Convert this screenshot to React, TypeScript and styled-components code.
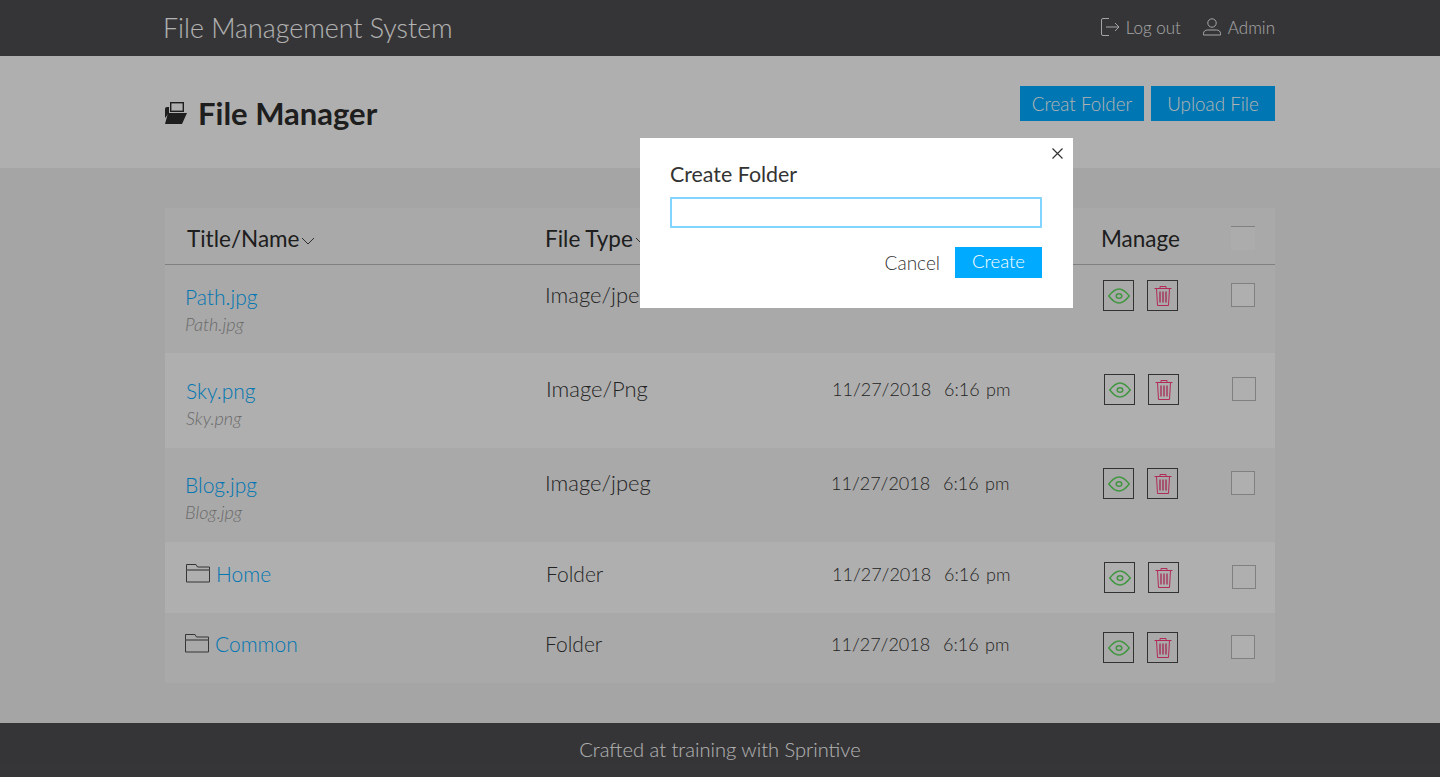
import React from "react";
import styled, { createGlobalStyle } from "styled-components";

interface FileRow {
  name: string;
  sub?: string;
  type: string;
  isFolder?: boolean;
  height: number;
  top: number;
}

const rows: FileRow[] = [
  { name: "Path.jpg", sub: "Path.jpg", type: "Image/jpeg", height: 88, top: 15 },
  { name: "Sky.png", sub: "Sky.png", type: "Image/Png", height: 95, top: 21 },
  { name: "Blog.jpg", sub: "Blog.jpg", type: "Image/jpeg", height: 94, top: 20 },
  { name: "Home", type: "Folder", isFolder: true, height: 71, top: 20 },
  { name: "Common", type: "Folder", isFolder: true, height: 70, top: 19 },
];

const GlobalStyle = createGlobalStyle`
  html, body {
    margin: 0;
    padding: 0;
    background: #ededed;
    font-family: "Lato", "Open Sans", "Liberation Sans", sans-serif;
    font-weight: 300;
  }
  * {
    box-sizing: border-box;
  }
`;

function LogoutIcon() {
  return (
    <svg width="20" height="20" viewBox="0 0 20 20" fill="none" stroke="#fff" strokeWidth="1">
      <path d="M9 1.500H3a1.500 1.500 0 0 0-1.500 1.500v14a1.500 1.500 0 0 0 1.500 1.500h6" />
      <path d="M6 10h13M15 6l4 4-4 4" />
    </svg>
  );
}

function UserIcon() {
  return (
    <svg width="20" height="20" viewBox="0 0 20 20" fill="none" stroke="#fff" strokeWidth="1">
      <circle cx="10" cy="6" r="4.200" />
      <path d="M1.500 18v-1.500c0-2.200 1.800-3.500 4-3.500h9c2.200 0 4 1.300 4 3.500V18z" />
    </svg>
  );
}

function ManagerIcon() {
  return (
    <svg width="22" height="22" viewBox="0 0 22 22">
      <rect x="5.700" y="0.700" width="12.600" height="8.600" fill="none" stroke="#2c2c2c" strokeWidth="1.400" />
      <path d="M4 5v6l-4 5V7a2 2 0 0 1 2-2z" fill="#2c2c2c" />
      <path d="M3 11h19l-5 11H0z" fill="#2c2c2c" />
    </svg>
  );
}

function FolderIcon() {
  return (
    <svg width="24" height="20" viewBox="0 0 24 20" fill="none" stroke="#4c4c4c" strokeWidth="1">
      <path d="M0.500 1.500h9.500l1.500 2.500h12v15h-23z" />
      <path d="M0.500 7h23" stroke="#7c7c7c" strokeWidth="1.500" />
    </svg>
  );
}

function EyeIcon() {
  return (
    <svg width="22" height="16" viewBox="0 0 22 16" fill="none" stroke="#5ed85e" strokeWidth="1.500">
      <path d="M0.800 8C4 3.800 7.500 1 11 1S18 3.800 21.200 8C18 12.200 14.500 15 11 15S4 12.200 0.800 8z" />
      <ellipse cx="11" cy="8" rx="2.800" ry="2.300" />
    </svg>
  );
}

function TrashIcon() {
  return (
    <svg width="18" height="21" viewBox="0 0 18 21" fill="none" stroke="#ff3d7f" strokeWidth="1">
      <path d="M0.500 3.500h17" />
      <path d="M6 3.500V1.500h6v2" />
      <path d="M2.500 3.500l1 17h11l1-17" />
      <path d="M6 6.500v11M9 6.500v11M12 6.500v11" stroke="#e8004f" />
    </svg>
  );
}

function Caret() {
  return (
    <svg width="14" height="8" viewBox="0 0 14 8" fill="none" stroke="#444" strokeWidth="1">
      <path d="M1 1l6 6 6-6" />
    </svg>
  );
}

function CloseIcon() {
  return (
    <svg width="13" height="13" viewBox="0 0 13 13" fill="none" stroke="#333" strokeWidth="1.200">
      <path d="M1.500 1.500l10 10M11.500 1.500l-10 10" />
    </svg>
  );
}

export default function App() {
  return (
    <>
      <GlobalStyle />
      <Page>
        <TopBar>
          <Brand>File Management System</Brand>
          <UserNav>
            <NavItem>
              <LogoutIcon />
              Log out
            </NavItem>
            <NavItem>
              <UserIcon />
              Admin
            </NavItem>
          </UserNav>
        </TopBar>

        <Hero>
          <PageTitle>
            <ManagerIcon />
            File Manager
          </PageTitle>
          <HeroActions>
            <PrimaryButton>Creat Folder</PrimaryButton>
            <PrimaryButton>Upload File</PrimaryButton>
          </HeroActions>
        </Hero>

        <Main>
          <Table>
            <HeadRow>
              <HeadCell>
                Title/Name
                <Caret />
              </HeadCell>
              <HeadCell>
                File Type
                <Caret />
              </HeadCell>
              <HeadCell />
              <HeadCell>Manage</HeadCell>
              <HeadCheck />
            </HeadRow>
            {rows.map((row, index) => (
              <Row key={row.name} $even={index % 2 === 1} $height={row.height} $top={row.top}>
                {row.isFolder ? (
                  <FolderName>
                    <FolderIcon />
                    <FileLink>{row.name}</FileLink>
                  </FolderName>
                ) : (
                  <NameCell>
                    <FileLink>{row.name}</FileLink>
                    <SubName>{row.sub}</SubName>
                  </NameCell>
                )}
                <TextCell $folder={!!row.isFolder}>{row.type}</TextCell>
                <DateCell $folder={!!row.isFolder}>11/27/2018&nbsp;&nbsp;6:16 pm</DateCell>
                <Actions>
                  <IconButton>
                    <EyeIcon />
                  </IconButton>
                  <IconButton>
                    <TrashIcon />
                  </IconButton>
                </Actions>
                <RowCheck />
              </Row>
            ))}
          </Table>
        </Main>

        <Footer>Crafted at training with Sprintive</Footer>

        <Backdrop />
        <Modal>
          <CloseButton>
            <CloseIcon />
          </CloseButton>
          <ModalTitle>Create Folder</ModalTitle>
          <FolderInput />
          <ModalActions>
            <CancelButton>Cancel</CancelButton>
            <CreateButton>Create</CreateButton>
          </ModalActions>
        </Modal>
      </Page>
    </>
  );
}

const Page = styled.div`
  position: relative;
  display: flex;
  flex-direction: column;
  height: 777px;
  overflow: hidden;
  background: #ededed;
`;

const TopBar = styled.header`
  height: 56px;
  flex: none;
  padding: 0 165px 2px 163px;
  display: flex;
  align-items: center;
  justify-content: space-between;
  background: #4d4d50;
  color: #fff;
`;

const Brand = styled.div`
  margin-top: 2px;
  font-size: 26.8px;
  font-weight: 300;
`;

const UserNav = styled.nav`
  display: flex;
  align-items: center;
  gap: 21px;
`;

const NavItem = styled.div`
  display: flex;
  align-items: center;
  gap: 6px;
  font-size: 17px;
  opacity: 0.9;
`;

const Hero = styled.section`
  height: 112px;
  flex: none;
  padding: 0 165px;
  display: flex;
  justify-content: space-between;
  align-items: flex-start;
  background: #fbfbfb;
`;

const PageTitle = styled.h1`
  margin: 40px 0 0;
  display: flex;
  align-items: center;
  gap: 11px;
  font-size: 31px;
  line-height: 34px;
  font-weight: 700;
  color: #2c2c2c;
`;

const HeroActions = styled.div`
  display: flex;
  gap: 7px;
  margin-top: 30px;
`;

const PrimaryButton = styled.button`
  width: 124px;
  height: 35px;
  border: none;
  padding: 0;
  background: #00aaff;
  color: #fff;
  font: inherit;
  font-size: 18.8px;
`;

const Main = styled.main`
  flex: 1;
  padding-top: 40px;
`;

const Table = styled.div`
  width: 1110px;
  margin: 0 auto;
`;

const HeadRow = styled.div`
  height: 57px;
  padding: 4px 0 0 22px;
  display: grid;
  grid-template-columns: 358px 286px 270px 130px 1fr;
  align-items: center;
  border-bottom: 1px solid #b8b8b8;
  background: #f2f2f2;
`;

const HeadCell = styled.div`
  display: flex;
  align-items: center;
  gap: 2px;
  font-size: 22.5px;
  font-weight: 400;
  color: #2c2c2c;

  svg {
    margin-top: 6px;
  }
`;

const HeadCheck = styled.div`
  width: 24px;
  height: 24px;
  border-top: 1px solid #b8b8b8;
  background: #f6f6f6;
`;

const Row = styled.div<{ $even: boolean; $height: number; $top: number }>`
  height: ${(p) => p.$height}px;
  padding-top: ${(p) => p.$top}px;
  padding-left: ${(p) => (p.$even ? 21 : 20)}px;
  display: grid;
  grid-template-columns: 360px 286px 272px 128px 1fr;
  align-items: start;
  background: ${(p) => (p.$even ? "#fbfbfb" : "#f2f2f2")};
  color: #333;
`;

const NameCell = styled.div`
  display: flex;
  flex-direction: column;
  margin-top: 1px;
`;

const FolderName = styled.div`
  display: flex;
  align-items: center;
  gap: 6px;
  margin-top: -4px;

  svg {
    margin-top: -3px;
  }
`;

const FileLink = styled.a`
  font-size: 21px;
  line-height: 32px;
  color: #00aaff;
`;

const SubName = styled.div`
  font-size: 18px;
  line-height: 22px;
  font-style: italic;
  color: #999;
`;

const TextCell = styled.div<{ $folder: boolean }>`
  margin-top: ${(p) => (p.$folder ? -3 : 0)}px;
  font-size: ${(p) => (p.$folder ? 21 : 22)}px;
  line-height: 30px;
`;

const DateCell = styled.div<{ $folder: boolean }>`
  margin-top: ${(p) => (p.$folder ? -3 : 0)}px;
  font-size: 18px;
  word-spacing: 1.500px;
  line-height: 30px;
`;

const Actions = styled.div`
  display: flex;
  gap: 13px;
`;

const IconButton = styled.button`
  width: 31px;
  height: 31px;
  padding: 0;
  display: flex;
  align-items: center;
  justify-content: center;
  border: 1px solid #484848;
  background: transparent;
`;

const RowCheck = styled.div`
  width: 24px;
  height: 24px;
  margin-top: 3px;
  border: 1px solid #b8b8b8;
  background: #fbfbfb;
`;

const Footer = styled.footer`
  height: 54px;
  flex: none;
  padding-bottom: 2px;
  display: flex;
  align-items: center;
  justify-content: center;
  background: #4d4d50;
  color: #fff;
  font-size: 20.1px;
`;

const Backdrop = styled.div`
  position: absolute;
  inset: 0;
  background: rgba(0, 0, 0, 0.3);
`;

const Modal = styled.div`
  position: absolute;
  left: 640px;
  top: 138px;
  width: 433px;
  height: 170px;
  padding: 24px 31px 0 30px;
  background: #fff;
`;

const CloseButton = styled.button`
  position: absolute;
  top: 9px;
  right: 9px;
  display: flex;
  padding: 0;
  border: none;
  background: transparent;
`;

const ModalTitle = styled.div`
  font-size: 21.4px;
  line-height: 24px;
  font-weight: 400;
  color: #333;
`;

const FolderInput = styled.input`
  display: block;
  width: 100%;
  height: 31px;
  margin-top: 11px;
  border: 2px solid #80d4ff;
  border-radius: 1px;
  outline: none;
`;

const ModalActions = styled.div`
  display: flex;
  justify-content: flex-end;
  align-items: center;
  gap: 15px;
  margin-top: 19px;
`;

const CancelButton = styled.button`
  padding: 0;
  border: none;
  background: transparent;
  font: inherit;
  font-size: 19px;
  color: #333;
`;

const CreateButton = styled.button`
  width: 87px;
  height: 31px;
  padding: 0 0 3px;
  border: none;
  background: #00aaff;
  color: #fff;
  font: inherit;
  font-size: 18.5px;
`;
